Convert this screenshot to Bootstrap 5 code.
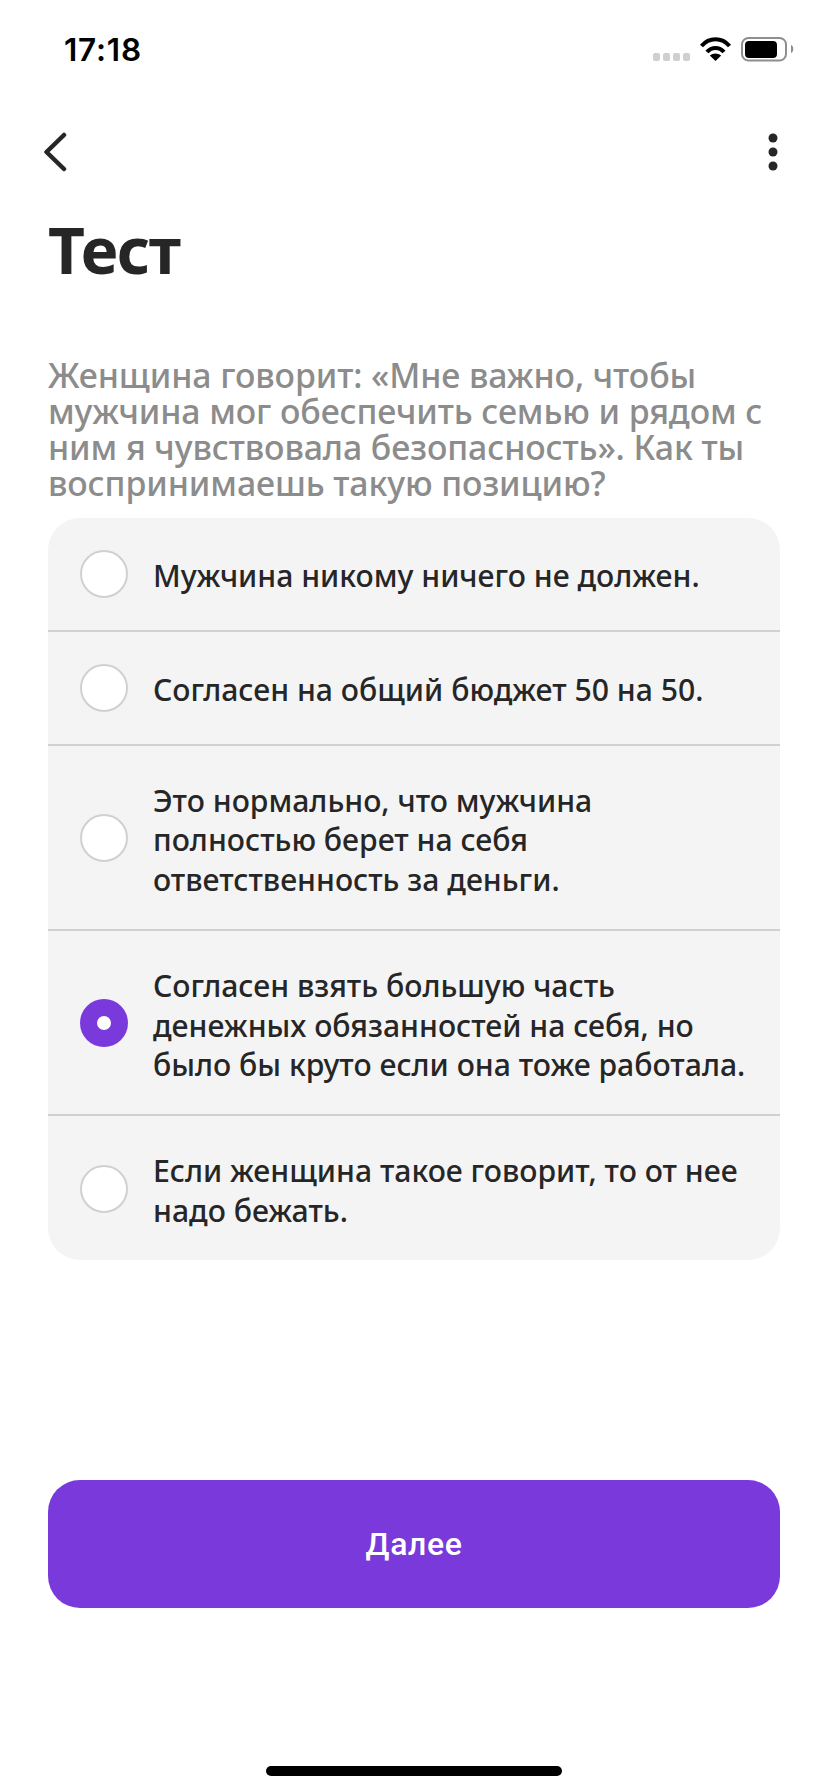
<!DOCTYPE html>
<html lang="ru">
<head>
<meta charset="utf-8">
<title>Тест</title>
<link href="https://cdn.jsdelivr.net/npm/bootstrap@5.3.0/dist/css/bootstrap.min.css" rel="stylesheet">
<style>
html,body{height:1792px;overflow:hidden;background:#fff}
body{font-family:"Noto Sans","Liberation Sans",sans-serif;color:#262626}
.screen{height:1792px;padding:0 48px}
.status-bar{height:94px;margin:0 -14px 0 16px;padding-top:31px}
.status-icons{margin-top:5px}
.clock{font-family:"Inter",sans-serif;font-weight:600;font-size:31.5px;line-height:38px;color:#000;letter-spacing:.8px}
.top-nav{height:116px;margin:0 2px 0 -5px}
.page-title{font-size:64px;font-weight:700;line-height:80px;margin:0;letter-spacing:-1.5px;color:#262626}
.question{font-size:33.9px;font-weight:500;line-height:36px;color:#8c8c8c;margin:67px 0 17px;letter-spacing:-.1px}
.answers{background:#f4f4f4;border-radius:32px;overflow:hidden}
.answer{display:flex;align-items:center;gap:25px;padding:31px 24px 30px 32px;background:transparent;border:0;border-bottom:2px solid #d0d0d0;font-size:30.2px;font-weight:500;line-height:39.4px;color:#262626;border-radius:0!important}
.answer:last-child{border-bottom:0}
.answer-one{padding-top:32px;padding-bottom:32px}
.answer-text{padding-top:4px}
.radio-mark{flex:0 0 48px;width:48px;height:48px;border-radius:50%;background:#fff;border:2px solid #d0d0d0}
.radio-on{background:#7a39db;border:0;display:flex;align-items:center;justify-content:center}
.radio-on::after{content:"";width:14px;height:14px;background:#fff;border-radius:50%}
.next-btn{height:128px;border-radius:32px;background:#7a39db;border:0;color:#fff;font-family:"Roboto",sans-serif;font-size:32px;font-weight:500;letter-spacing:.6px}
.next-btn:hover{background:#7a39db;color:#fff}
.btn-space{margin-top:220px}
.home-bar{width:296px;height:10px;border-radius:5px;background:#000;margin:158px auto 0}
</style>
</head>
<body>
<div class="screen d-flex flex-column">
  <div class="status-bar d-flex justify-content-between align-items-start">
    <div class="clock">17:18</div>
    <svg class="status-icons" width="141" height="26" viewBox="0 0 141 26" aria-hidden="true">
      <g fill="#cfcfcf"><rect x="0" y="17" width="7" height="8" rx="2"/><rect x="10" y="17" width="7" height="8" rx="2"/><rect x="20" y="17" width="7" height="8" rx="2"/><rect x="30" y="17" width="7" height="8" rx="2"/></g>
      <g fill="none" stroke="#000" stroke-width="4"><path d="M48.500 10C56 1 69 1 76.500 10"/><path d="M54 16C58.500 10.500 66.500 10.500 71 16"/></g>
      <path d="M62.500 25L56.800 19.500C60 16.800 65 16.800 68.200 19.500Z" fill="#000"/>
      <rect x="89" y="2" width="44" height="22.500" rx="6.500" fill="none" stroke="#8e8e8e" stroke-width="2"/>
      <rect x="92" y="5" width="32" height="17" rx="4" fill="#000"/>
      <path d="M138 9c3 .5 3 7.500 0 8z" fill="#8e8e8e"/>
    </svg>
  </div>
  <div class="top-nav d-flex justify-content-between align-items-center">
    <svg width="24" height="40" viewBox="0 0 24 40" aria-hidden="true"><path d="M21 3L3.500 20L21 37" fill="none" stroke="#262626" stroke-width="4.500" stroke-linecap="round" stroke-linejoin="round"/></svg>
    <svg width="10" height="38" viewBox="0 0 10 38" aria-hidden="true"><g fill="#262626"><circle cx="5" cy="5" r="4.500"/><circle cx="5" cy="19" r="4.500"/><circle cx="5" cy="33" r="4.500"/></g></svg>
  </div>
  <h1 class="page-title">Тест</h1>
  <p class="question">Женщина говорит: «Мне важно, чтобы мужчина мог обеспечить семью и рядом с ним я чувствовала безопасность». Как ты воспринимаешь такую позицию?</p>
  <div class="answers list-group">
    <div class="list-group-item answer answer-one"><span class="radio-mark"></span><span class="answer-text">Мужчина никому ничего не должен.</span></div>
    <div class="list-group-item answer answer-one"><span class="radio-mark"></span><span class="answer-text">Согласен на общий бюджет 50 на 50.</span></div>
    <div class="list-group-item answer"><span class="radio-mark"></span><span class="answer-text">Это нормально, что мужчина полностью берет на себя ответственность за деньги.</span></div>
    <div class="list-group-item answer"><span class="radio-mark radio-on"></span><span class="answer-text">Согласен взять большую часть денежных обязанностей на себя, но было бы круто если она тоже работала.</span></div>
    <div class="list-group-item answer"><span class="radio-mark"></span><span class="answer-text">Если женщина такое говорит, то от нее надо бежать.</span></div>
  </div>
  <button type="button" class="btn next-btn w-100 btn-space">Далее</button>
  <div class="home-bar"></div>
</div>
<script src="https://cdn.jsdelivr.net/npm/bootstrap@5.3.0/dist/js/bootstrap.bundle.min.js"></script>
</body>
</html>
